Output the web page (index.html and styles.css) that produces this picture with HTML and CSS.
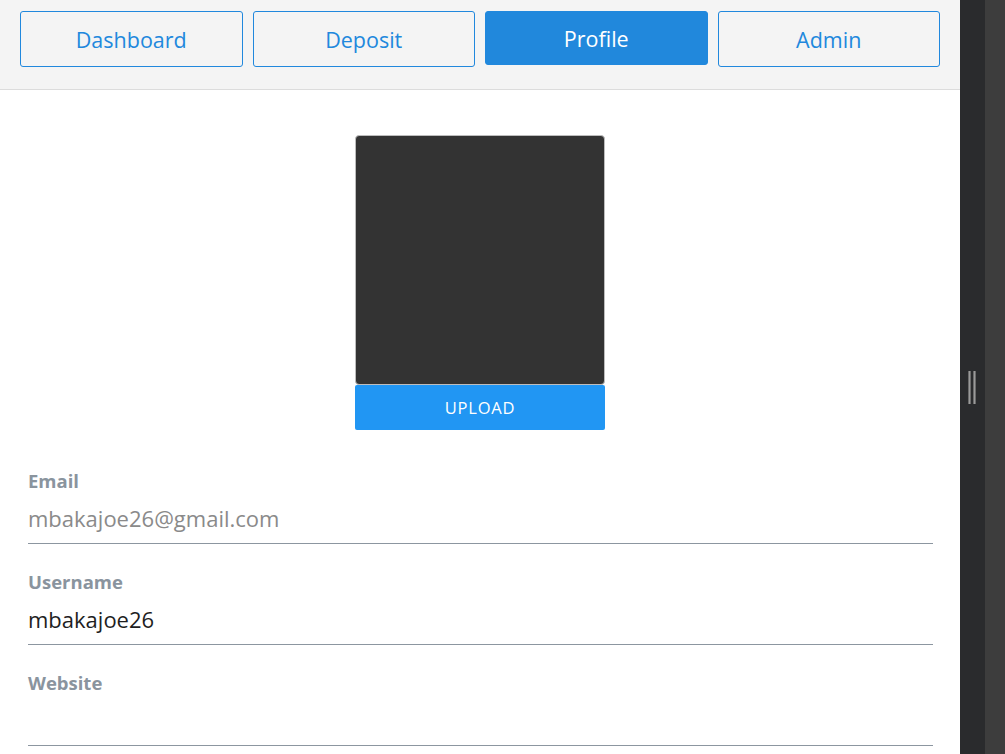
FILE: index.html
```html
<!DOCTYPE html>
<html>
<head>
<meta charset="utf-8">
<link rel="stylesheet" href="styles.css">
</head>
<body>
<div class="app">
  <main class="main">
    <nav class="tabs">
      <button class="tab">Dashboard</button>
      <button class="tab">Deposit</button>
      <button class="tab active">Profile</button>
      <button class="tab">Admin</button>
    </nav>
    <section class="content">
      <div class="avatar-wrap">
        <div class="avatar"></div>
        <button class="upload">UPLOAD</button>
      </div>
      <div class="fields">
        <div class="field">
          <label class="label">Email</label>
          <div class="input muted">mbakajoe26@gmail.com</div>
        </div>
        <div class="field">
          <label class="label">Username</label>
          <div class="input">mbakajoe26</div>
        </div>
        <div class="field">
          <label class="label">Website</label>
          <div class="input"></div>
        </div>
      </div>
    </section>
  </main>
  <aside class="splitter">
    <div class="grip"><span></span><span></span></div>
  </aside>
  <div class="edge"></div>
</div>
</body>
</html>
```
FILE: styles.css
```css
* { box-sizing: border-box; }
html, body { margin: 0; padding: 0; height: 100%; }
body {
  font-family: "Open Sans", "Noto Sans", "Liberation Sans", sans-serif;
  background: #fff;
  overflow: hidden;
}
.app {
  display: flex;
  height: 754px;
}
.main {
  width: 960px;
  flex: none;
  background: #fff;
  display: flex;
  flex-direction: column;
}
.tabs {
  height: 90px;
  background: #f4f4f4;
  border-bottom: 1px solid #dcdcdc;
  display: flex;
  align-items: flex-start;
  gap: 10px;
  padding: 11px 20px 0 20px;
}
.tab {
  flex: 1;
  height: 56px;
  border: 1px solid #2188dd;
  border-radius: 3px;
  background: #f4f4f4;
  color: #2188dd;
  font-family: inherit;
  font-size: 21.5px;
  padding: 0;
  cursor: pointer;
}
.tab.active {
  background: #2188dc;
  color: #fff;
  height: 54px;
  padding-top: 1px;
}
.content {
  flex: 1;
  display: flex;
  flex-direction: column;
  padding: 45px 27px 0 28px;
}
.avatar-wrap {
  align-self: center;
  width: 250px;
  display: flex;
  flex-direction: column;
  margin-left: -1px;
}
.avatar {
  height: 250px;
  background: #333;
  border: 1px solid #bdbdbd;
  border-radius: 4px;
}
.upload {
  height: 45px;
  border: none;
  border-radius: 2px;
  background: #2196f3;
  color: #fff;
  font-family: inherit;
  font-size: 16.5px;
  letter-spacing: 0.8px;
  padding: 0;
}
.fields {
  display: flex;
  flex-direction: column;
  margin-top: 39px;
  gap: 26px;
}
.field {
  display: flex;
  flex-direction: column;
}
.label {
  font-size: 18.5px;
  font-weight: 700;
  color: #8a949e;
  line-height: 24px;
}
.input {
  height: 51px;
  font-size: 22px;
  color: #1e1e1e;
  border-bottom: 1px solid #8c96a0;
  padding-top: 10px;
  line-height: 30px;
}
.input.muted { color: #8a8a8a; }
.splitter {
  width: 25px;
  flex: none;
  background: #2a2b2d;
  display: flex;
  flex-direction: column;
  align-items: center;
  padding-top: 371px;
}
.grip {
  display: flex;
  gap: 2px;
  margin-left: -1px;
}
.grip span {
  width: 3px;
  height: 33px;
  background: #9a9a9a;
  border-left: 1px solid #6c6c6c;
  border-right: 1px solid #6c6c6c;
}
.edge {
  flex: 1;
  background: #3d3d3d;
}
```
